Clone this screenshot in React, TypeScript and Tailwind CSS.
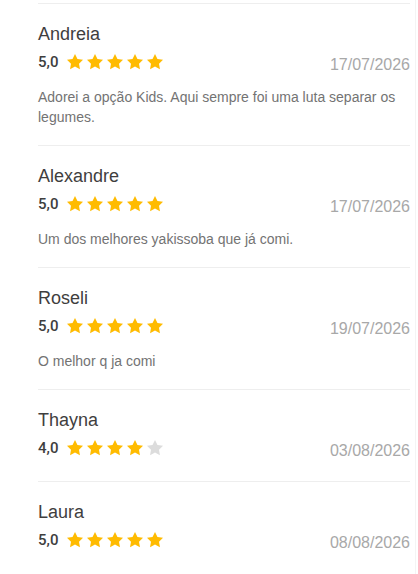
import React from "react";

type Review = { name: string; rating: number; date: string; comment?: string };

const reviews: Review[] = [
  { name: "Andreia", rating: 5, date: "17/07/2026", comment: "Adorei a opção Kids. Aqui sempre foi uma luta separar os legumes." },
  { name: "Alexandre", rating: 5, date: "17/07/2026", comment: "Um dos melhores yakissoba que já comi." },
  { name: "Roseli", rating: 5, date: "19/07/2026", comment: "O melhor q ja comi" },
  { name: "Thayna", rating: 4, date: "03/08/2026" },
  { name: "Laura", rating: 5, date: "08/08/2026" },
];

function Star({ filled }: { filled: boolean }) {
  return (
    <svg width="16" height="16" viewBox="2 2 20 20" className="block">
      <path
        d="M12 2l3.09 6.26L22 9.27l-5 4.87 1.18 6.88L12 17.77l-6.18 3.25L7 14.14 2 9.27l6.91-1.01L12 2z"
        fill={filled ? "#ffbb00" : "#dcdcdc"}
      />
    </svg>
  );
}

export default function App() {
  return (
    <div
      className="w-[418px] h-[574px] bg-white overflow-hidden flex"
      style={{ fontFamily: '"Liberation Sans", Arial, sans-serif' }}
    >
      <div className="w-[410px] pl-[38px] pt-[3px] flex flex-col shrink-0">
        {reviews.map((r) => (
          <div key={r.name} className="border-t border-[#eeeeee] pt-[16px] pb-[18px]">
            <div className="text-[18px] leading-[28px] text-[#3f3e3e]">{r.name}</div>
            <div className="mt-[2px] flex items-start justify-between">
              <div className="h-[24px] flex items-center">
                <span className="font-['Roboto',sans-serif] text-[15px] leading-none font-medium text-[#3e3e3e]">
                  {r.rating},0
                </span>
                <div className="ml-[9px] flex items-center gap-[4px]">
                  {[1, 2, 3, 4, 5].map((i) => (
                    <Star key={i} filled={i <= r.rating} />
                  ))}
                </div>
              </div>
              <span className="pt-[3px] text-[16px] leading-[24px] text-[#a8a8a8]">{r.date}</span>
            </div>
            {r.comment && (
              <p className="mt-[10px] text-[14px] leading-[20px] text-[#737373]">{r.comment}</p>
            )}
          </div>
        ))}
      </div>
      <div className="w-[5px] shrink-0" />
      <div className="w-px h-full bg-[#f4f4f4] shrink-0" />
    </div>
  );
}
